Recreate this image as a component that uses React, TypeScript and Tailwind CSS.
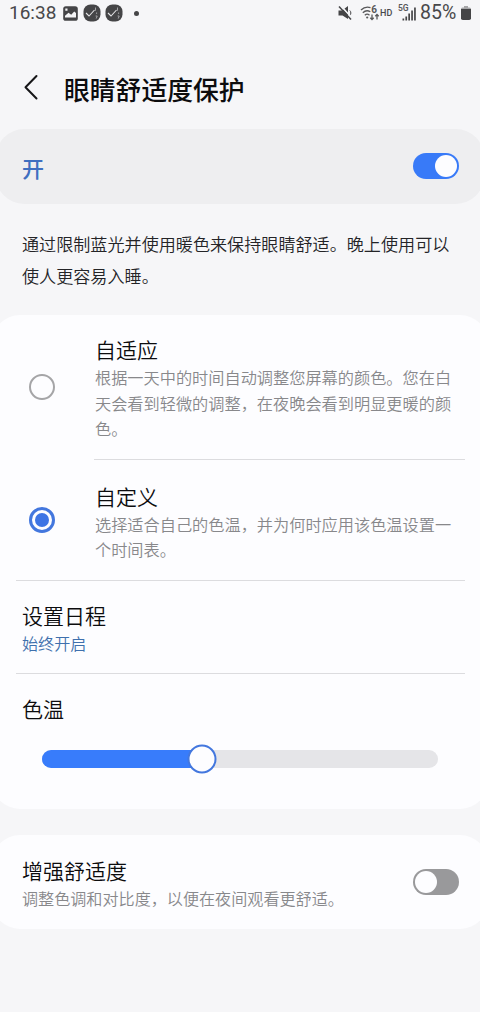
import { useState } from 'react'
import type { ReactNode } from 'react'

interface SwitchProps {
  checked: boolean
  onChange: (checked: boolean) => void
}

function Switch({ checked, onChange }: SwitchProps) {
  return (
    <button
      type="button"
      role="switch"
      aria-checked={checked}
      onClick={() => onChange(!checked)}
      className={`flex h-[26px] w-[46px] shrink-0 items-center rounded-full px-[2px] ${
        checked ? 'justify-end bg-[#387af8]' : 'justify-start bg-[#99999b]'
      }`}
    >
      <span className="size-[22px] rounded-full bg-[#fdfdff]" />
    </button>
  )
}

interface RadioOptionProps {
  title: string
  selected: boolean
  onSelect: () => void
  className: string
  children: ReactNode
}

function RadioOption({ title, selected, onSelect, className, children }: RadioOptionProps) {
  return (
    <button type="button" onClick={onSelect} className={`flex w-full items-center text-left ${className}`}>
      <span
        className={`ml-[29px] mr-10 flex size-[26px] shrink-0 items-center justify-center rounded-full ${
          selected ? 'border-[3px] border-[#4377de]' : 'border-2 border-[#a5a5a7]'
        }`}
      >
        {selected && <span className="size-[14px] rounded-full bg-[#3d74e4]" />}
      </span>
      <span className="flex flex-col pt-[3px]">
        <span className="text-[21px] font-[350] leading-[31px] text-[#0c0c0e]">{title}</span>
        <span className="whitespace-nowrap text-[16.2px] font-[350] leading-[25.5px] text-[#88888b]">{children}</span>
      </span>
    </button>
  )
}

function CheckBadge() {
  return (
    <svg width="18" height="18" viewBox="0 0 18 18" fill="none">
      <rect x="0.5" y="0.5" width="17" height="17" rx="7" fill="#454547" />
      <path d="M3 9l3 3 5.5-6" stroke="#e4e4e6" strokeWidth="1.1" />
      <path d="M12.5 3.5v3.2M13.6 8.5v1.4M12.6 12h1.6l-1 2.6" stroke="#a4a4a6" strokeWidth="1" />
    </svg>
  )
}

function StatusBar() {
  return (
    <div className="flex h-[26px] items-center justify-between px-[9px] font-['Roboto','Noto_Sans_CJK_SC',sans-serif] text-[#48484a]">
      <div className="flex items-center">
        <span className="w-[47px] whitespace-nowrap text-[19px] leading-[26px]">16:38</span>
        <svg className="ml-[7px]" width="15" height="15" viewBox="0 0 15 15">
          <rect x="0.2" y="0.2" width="14.6" height="14.6" rx="2.6" fill="#454547" />
          <path d="M2.3 2.5h2.2v2.2H2.3zM2 11.5V9.8l3.5-3 2.7 2L11.2 5.5 13 7v4.5z" fill="#f4f4f6" />
        </svg>
        <div className="ml-[5px] flex gap-[4px]">
          <CheckBadge />
          <CheckBadge />
        </div>
        <span className="ml-[11px] size-[5px] rounded-full bg-[#454547]" />
      </div>

      <div className="flex items-center">
        <svg width="15" height="16" viewBox="0 0 15 16">
          <path d="M0.5 5.5h3.5L10 1v13L4.5 10.5h-4z" fill="#454547" />
          <path d="M11.8 5.5c1.4 1 1.4 4 0 5" fill="none" stroke="#454547" strokeWidth="1" />
          <path d="M2.5 0.5l12 13" stroke="#f5f6f8" strokeWidth="1.6" />
          <path d="M1 1.5l12 13" stroke="#454547" strokeWidth="1.5" />
        </svg>
        <svg className="ml-[7px]" width="20" height="18" viewBox="0 0 20 18" fill="none" stroke="#58585a" strokeWidth="1.3">
          <path d="M1 6C3.8 3.2 7 2.4 10.5 3.6M2.8 8.7c2.4-2.3 5-2.5 7.5-1M4.8 11.2c1.5-1.3 3.2-1.3 4.7 0" />
          <circle cx="7.2" cy="13.5" r="1.1" fill="#58585a" stroke="none" />
          <path d="M12 10.5v5M10.3 13.7l1.7 1.9 1.7-1.9M17 15.5v-5M15.3 12.3l1.7-1.9 1.7 1.9" />
          <text x="11.2" y="8.5" fontSize="10" fontWeight="700" fill="#58585a" stroke="none">6</text>
        </svg>
        <span className="w-[13px] text-[9px] font-medium leading-[26px]">HD</span>
        <svg className="ml-[5px]" width="20" height="18" viewBox="0 0 20 18">
          <text x="0" y="7" fontSize="8.5" fontWeight="600" fill="#58585a">5G</text>
          <path d="M4.5 14.5h1.7v2H4.5zM7.4 12.5h1.7v4H7.4zM10.3 9.5H12v7h-1.7zM13.2 6.5h1.7v10h-1.7zM16.1 3.5h1.7v13h-1.7z" fill="#454547" />
        </svg>
        <span className="ml-[2px] w-10 whitespace-nowrap text-[19.5px] leading-[26px]">85%</span>
        <svg className="ml-px" width="10" height="14" viewBox="0 0 10 14">
          <path d="M3 0h4v1.5h1.5A1.5 1.5 0 0 1 10 3H0a1.5 1.5 0 0 1 1.5-1.5H3z" fill="#a6a6a8" />
          <path d="M0 3h10v9.2A1.8 1.8 0 0 1 8.2 14H1.8A1.8 1.8 0 0 1 0 12.2z" fill="#454547" />
        </svg>
      </div>
    </div>
  )
}

export default function App() {
  const [enabled, setEnabled] = useState(true)
  const [enhanced, setEnhanced] = useState(false)
  const [mode, setMode] = useState<'adaptive' | 'custom'>('custom')
  const [temperature] = useState(40.4)

  return (
    <div
      lang="zh-CN"
      className="flex h-[1012px] w-[480px] flex-col overflow-hidden bg-[#f6f6f8] font-['Noto_Sans_CJK_SC',sans-serif]"
    >
      <StatusBar />

      <header className="flex h-[103px] items-center pl-[23px] pt-5">
        <svg className="mb-[2px]" width="16" height="26" viewBox="0 0 16 26" fill="none" stroke="#161618" strokeWidth="2">
          <path d="M13.5 2L2.5 13.3 13.5 24.5" strokeLinecap="round" strokeLinejoin="round" />
        </svg>
        <h1 className="ml-[25px] pt-[2px] text-[25.8px] font-medium leading-[38px] text-[#0c0c0e]">眼睛舒适度保护</h1>
      </header>

      <section className="-mx-1 flex h-[75px] items-center justify-between rounded-[28px] bg-[#eeeef0] pb-px pl-[26px] pr-[25px]">
        <span className="pt-[2px] text-[22px] font-medium text-[#3f6fc0]">开</span>
        <Switch checked={enabled} onChange={setEnabled} />
      </section>

      <p className="h-[111px] whitespace-nowrap pl-[22px] pt-6 text-[17.1px] font-[350] leading-[31.5px] text-[#242427]">
        通过限制蓝光并使用暖色来保持眼睛舒适。晚上使用可以
        <br />
        使人更容易入睡。
      </p>

      <section className="-mx-2 h-[494px] rounded-[28px] bg-[#fdfdff] px-2">
        <RadioOption
          title="自适应"
          selected={mode === 'adaptive'}
          onSelect={() => setMode('adaptive')}
          className="h-[144px] pb-px"
        >
          根据一天中的时间自动调整您屏幕的颜色。您在白
          <br />
          天会看到轻微的调整，在夜晚会看到明显更暖的颜
          <br />
          色。
        </RadioOption>
        <hr className="ml-[94px] mr-[15px] border-[#dcdcdf]" />
        <RadioOption
          title="自定义"
          selected={mode === 'custom'}
          onSelect={() => setMode('custom')}
          className="h-[120px]"
        >
          选择适合自己的色温，并为何时应用该色温设置一
          <br />
          个时间表。
        </RadioOption>
        <hr className="ml-4 mr-[15px] border-[#dcdcdf]" />

        <div className="flex h-[92px] flex-col justify-center pl-[22px] pt-[2px]">
          <span className="text-[21px] font-[350] leading-[31px] text-[#0c0c0e]">设置日程</span>
          <span className="text-[16.1px] font-[350] leading-[25.5px] text-[#3f70ad]">始终开启</span>
        </div>
        <hr className="ml-4 mr-[15px] border-[#dcdcdf]" />

        <div className="flex flex-col pl-[22px] pt-[19px]">
          <span className="text-[21px] font-[350] leading-[30px] text-[#0c0c0e]">色温</span>
          <div className="relative ml-5 mt-[27px] h-[18px] w-[396px] rounded-full bg-[#e5e5e8]">
            <div className="h-full rounded-l-full bg-[#387cfb]" style={{ width: `${temperature}%` }} />
            <div
              className="absolute top-1/2 size-[29px] -translate-x-1/2 -translate-y-1/2 rounded-full border-[2.5px] border-[#4377de] bg-[#fdfdff]"
              style={{ left: `${temperature}%` }}
            />
          </div>
        </div>
      </section>

      <section className="-mx-2 mt-[26px] flex h-[94px] items-center justify-between rounded-[28px] bg-[#fdfdff] pl-[30px] pr-[29px]">
        <div className="flex flex-col pt-[3px]">
          <span className="text-[21px] font-[350] leading-[31px] text-[#0c0c0e]">增强舒适度</span>
          <span className="text-[16.1px] font-[350] leading-[25.5px] text-[#88888b]">调整色调和对比度，以便在夜间观看更舒适。</span>
        </div>
        <Switch checked={enhanced} onChange={setEnhanced} />
      </section>
    </div>
  )
}
